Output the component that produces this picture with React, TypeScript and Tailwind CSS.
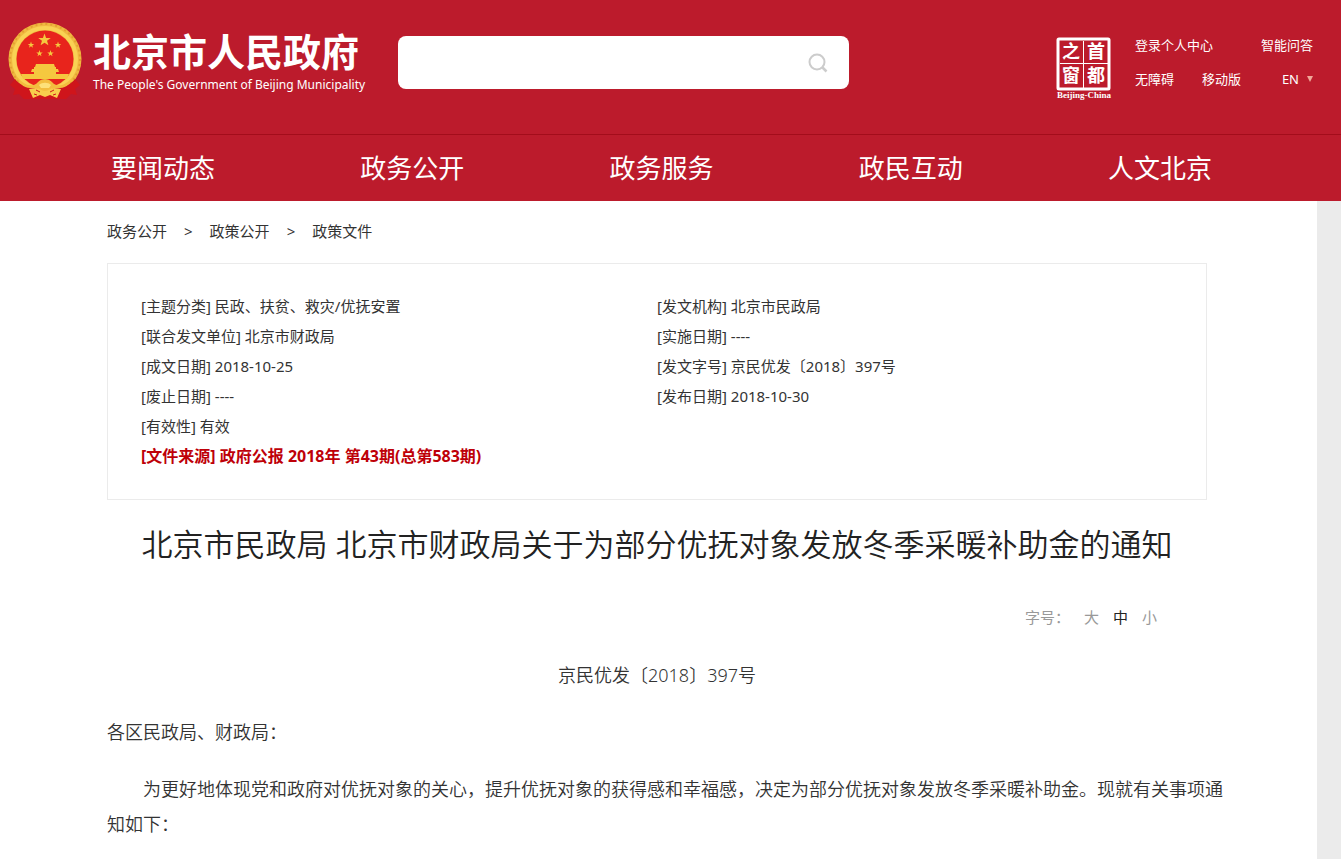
const NAV = ["要闻动态", "政务公开", "政务服务", "政民互动", "人文北京"];

const CRUMBS = ["政务公开", "政策公开", "政策文件"];

const INFO = [
  { label: "主题分类", value: "民政、扶贫、救灾/优抚安置" },
  { label: "发文机构", value: "北京市民政局" },
  { label: "联合发文单位", value: "北京市财政局" },
  { label: "实施日期", value: "----" },
  { label: "成文日期", value: "2018-10-25" },
  { label: "发文字号", value: "京民优发〔2018〕397号" },
  { label: "废止日期", value: "----" },
  { label: "发布日期", value: "2018-10-30" },
  { label: "有效性", value: "有效" },
];

const SIZES = [
  { label: "大", active: false },
  { label: "中", active: true },
  { label: "小", active: false },
];

const STAR = "M0-10 2.4-3.2 9.5-3.1 3.8 1.2 5.9 8.1 0 4-5.9 8.1-3.8 1.2-9.5-3.1-2.4-3.2Z";

function Emblem() {
  return (
    <svg viewBox="0 0 76 80" className="h-20 w-[76px] shrink-0" aria-hidden="true">
      <circle cx="38" cy="38" r="36.5" fill="#f0b840" />
      <circle cx="38" cy="38" r="35" fill="none" stroke="#e2a030" strokeWidth="2" strokeDasharray="2 3" />
      <circle cx="38" cy="38" r="31" fill="none" stroke="#f9d254" strokeWidth="4" />
      <circle cx="38" cy="38" r="28.5" fill="#e8241c" />
      <g fill="#f5c83f">
        <path d={STAR} transform="translate(37.5 19) scale(.66)" />
        <path d={STAR} transform="translate(24 24) scale(.34)" />
        <path d={STAR} transform="translate(51 24) scale(.34)" />
        <path d={STAR} transform="translate(32.5 32.5) scale(.34)" />
        <path d={STAR} transform="translate(43.5 32.5) scale(.34)" />
        <path d="M29 43h18l1 3H28ZM27 46h22v2h2l1 3H24l1-3h2ZM27 51h22v2H27ZM14 53h48l-2 5H16Z" />
      </g>
      <path d="M8 58c7 9 19 10 24 5 3-3 9-3 12 0 5 5 17 4 24-5l5 6-5 4 2 6-6-1-5 5H17l-5-5-6 1 2-6-5-4Z" fill="#cf151b" />
      <path d="M11 57c8 9 16 9 20 4 4-4 10-4 14 0 4 5 12 5 20-4-2 9-10 11-18 10l-5 3h-8l-5-3c-8 1-16-1-18-10Z" fill="#f3bd3e" />
      <path d="m22 68 7-1c4 0 5 3 9 3s5-3 9-3l7 1-4 9-7-3-5 2-5-2-7 3Z" fill="#f8cd4d" />
      <path d="M32 64c3-3 9-3 12 0l-2 3h-8Z" fill="#fde17a" />
      <path d="m29 69 4 2M47 69l-4 2M27 73l3 1M49 73l-3 1" stroke="#cf151b" />
    </svg>
  );
}

function Seal() {
  return (
    <svg viewBox="0 0 62 64" className="h-16 w-[62px] shrink-0 fill-white" role="img" aria-label="首都之窗">
      <rect x="5" y="3" width="51" height="50" rx="1" fill="none" stroke="#fff" strokeWidth="3" />
      <path d="M30 5h1v47h-1ZM7 27h48v1H7Z" />
      <g fontSize="18" fontWeight="700" textAnchor="middle">
        <text x="18" y="22">之</text>
        <text x="43" y="22">首</text>
        <text x="18" y="46">窗</text>
        <text x="43" y="46">都</text>
      </g>
      <text x="31" y="62" fontSize="9" fontWeight="700" textAnchor="middle" className="font-['Liberation_Serif',serif]">
        Beijing-China
      </text>
    </svg>
  );
}

function Header() {
  return (
    <header className="bg-[#bc1b2c] text-white">
      <div className="flex h-[134px] items-start pl-[7px] pr-7">
        <a href="#" className="mt-[21px] flex w-[359px] shrink-0">
          <Emblem />
          <span className="ml-[10px] mt-2 flex flex-col whitespace-nowrap">
            <span className="text-[38px] font-bold leading-[44px]">北京市人民政府</span>
            <span className="text-xs leading-6">The People's Government of Beijing Municipality</span>
          </span>
        </a>
        <form className="mt-9 ml-8 flex h-[53px] w-[451px] items-center rounded-lg bg-white pr-5">
          <input type="text" aria-label="搜索" className="h-full min-w-0 flex-1 bg-transparent px-4 text-base text-[#333] outline-none" />
          <button type="submit" aria-label="搜索">
            <svg viewBox="0 0 22 22" className="size-[22px]" fill="none" stroke="#ccc" strokeWidth="2">
              <circle cx="10" cy="10" r="7.5" />
              <path d="m15.5 15.5 4 4" strokeWidth="2.5" />
            </svg>
          </button>
        </form>
        <div className="ml-auto mt-9 flex gap-5">
          <Seal />
          <div className="flex w-[178px] flex-col text-[13px] leading-[18px]">
            <div className="flex justify-between">
              <a href="#">登录个人中心</a>
              <a href="#">智能问答</a>
            </div>
            <div className="mt-4 flex items-center">
              <a href="#">无障碍</a>
              <a href="#" className="ml-7">移动版</a>
              <a href="#" className="ml-auto flex items-center gap-2">
                EN
                <svg viewBox="0 0 6 6" className="size-[6px]" aria-hidden="true">
                  <path d="M0 0h6L3 6Z" fill="#f0a898" />
                </svg>
              </a>
            </div>
          </div>
        </div>
      </div>
      <nav className="flex h-[67px] items-center justify-between border-t border-[#a30d1b] pl-[111px] pr-[129px] text-[26px]">
        {NAV.map((item) => (
          <a key={item} href="#">{item}</a>
        ))}
      </nav>
    </header>
  );
}

function Info() {
  return (
    <section className="mt-5 border border-[#ebebeb] px-[33px] pt-[27px] pb-7 text-[15px] leading-[30px]">
      <ul className="grid grid-cols-2">
        {INFO.map((row) => (
          <li key={row.label}>
            [{row.label}] {row.value}
          </li>
        ))}
      </ul>
      <p className="text-base font-bold leading-[30px] text-[#be0008]">[文件来源] 政府公报 2018年 第43期(总第583期)</p>
    </section>
  );
}

export default function App() {
  return (
    <div
      lang="zh-CN"
      className="flex min-h-screen flex-col bg-[#ebebeb] font-['Noto_Sans','Noto_Sans_CJK_SC',sans-serif] text-[#333]"
    >
      <Header />
      <main className="mr-6 flex-1 bg-white pl-[107px] pr-[110px]">
        <nav aria-label="当前位置" className="flex gap-[17px] pt-[18px] text-[15px] leading-6">
          {CRUMBS.map((crumb, i) => (
            <span key={crumb} className="flex gap-[17px]">
              {i > 0 && <span>&gt;</span>}
              <a href="#">{crumb}</a>
            </span>
          ))}
        </nav>
        <Info />
        <h1 className="mt-[22px] text-center text-[31px] font-[350] leading-[44px] text-[#222]">
          北京市民政局 北京市财政局关于为部分优抚对象发放冬季采暖补助金的通知
        </h1>
        <div className="mt-[39px] flex justify-end gap-[14px] pr-[50px] text-[15px] leading-6 text-[#999]">
          <span>字号：</span>
          {SIZES.map((s) => (
            <button key={s.label} type="button" className={s.active ? "text-[#222]" : ""}>
              {s.label}
            </button>
          ))}
        </div>
        <article className="-mr-5 text-lg font-[350] leading-[35px]">
          <p className="mt-[29px] pr-5 text-center">京民优发〔2018〕397号</p>
          <p className="mt-[22px]">各区民政局、财政局：</p>
          <p className="mt-[22px] indent-[36px]">
            为更好地体现党和政府对优抚对象的关心，提升优抚对象的获得感和幸福感，决定为部分优抚对象发放冬季采暖补助金。现就有关事项通知如下：
          </p>
        </article>
      </main>
    </div>
  );
}
